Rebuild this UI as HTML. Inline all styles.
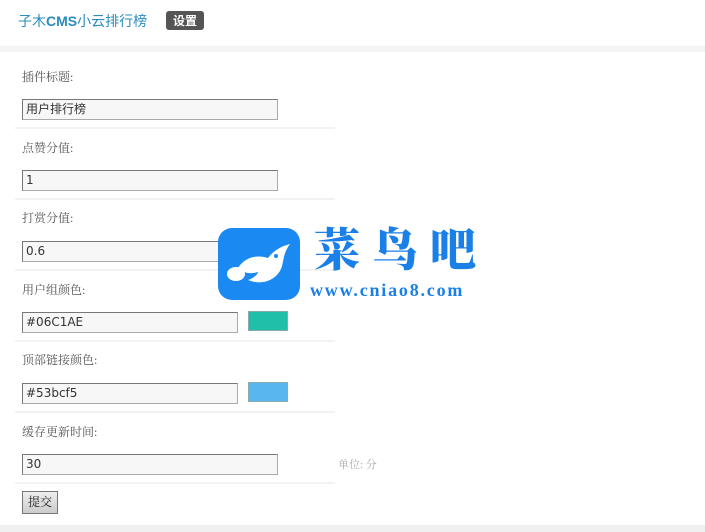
<!DOCTYPE html>
<html><head><meta charset="utf-8"><style>
*{margin:0;padding:0;box-sizing:border-box}
body{width:705px;height:532px;background:#fff;position:relative;overflow:hidden;font-family:"Liberation Serif","Noto Serif CJK SC",serif;font-size:12px;color:#444}
.a{position:absolute}
.lbl{position:absolute;left:22px;font-size:12px;color:#555}
.inp{position:absolute;left:22px;height:21px;border:1px solid #aaa;border-top-color:#777;border-left-color:#777;background:#f7f7f7;font-family:"DejaVu Sans","Noto Sans CJK SC",sans-serif;font-size:12px;color:#333;padding:2px 3px;line-height:15px}
.sep{position:absolute;left:15px;width:320px;height:2px;background:#f2f2f2}
.sw{position:absolute;left:248px;width:40px;height:20px;border:1px solid #8aa}
</style></head><body>
<div class="a" style="left:18px;top:11px;font-family:'Liberation Sans','Noto Sans CJK SC',sans-serif;font-size:14px;color:#2a8bbf">子木<b>CMS</b>小云排行榜</div>
<div class="a" style="left:166px;top:11px;width:38px;height:19px;background:#555;border-radius:3px;color:#fff;font-size:12px;text-align:center;line-height:19px;font-family:'Noto Sans CJK SC',sans-serif;font-weight:bold">设置</div>
<div class="a" style="left:0;top:46px;width:705px;height:6px;background:#f4f4f4"></div>

<div class="lbl" style="top:68px">插件标题:</div>
<div class="inp" style="top:99px;width:256px">用户排行榜</div>
<div class="sep" style="top:127px"></div>

<div class="lbl" style="top:139px">点赞分值:</div>
<div class="inp" style="top:170px;width:256px">1</div>
<div class="sep" style="top:198px"></div>

<div class="lbl" style="top:209px">打赏分值:</div>
<div class="inp" style="top:241px;width:256px">0.6</div>
<div class="sep" style="top:269px"></div>

<div class="lbl" style="top:281px">用户组颜色:</div>
<div class="inp" style="top:312px;width:216px">#06C1AE</div>
<div class="sw" style="top:311px;background:#1fbfa9"></div>
<div class="sep" style="top:340px"></div>

<div class="lbl" style="top:351px">顶部链接颜色:</div>
<div class="inp" style="top:383px;width:216px">#53bcf5</div>
<div class="sw" style="top:382px;background:#5ab6ee"></div>
<div class="sep" style="top:411px"></div>

<div class="lbl" style="top:423px">缓存更新时间:</div>
<div class="inp" style="top:454px;width:256px">30</div>
<div class="a" style="left:338px;top:456px;color:#aaa;font-size:11px">单位: 分</div>
<div class="sep" style="top:482px"></div>

<div class="a" style="left:22px;top:491px;width:36px;height:23px;border:1px solid #777;background:linear-gradient(#eee,#ccc);font-size:12px;text-align:center;line-height:21px;color:#222">提交</div>
<div class="a" style="left:0;top:525px;width:705px;height:7px;background:#f0f0f0"></div>

<div class="a" style="left:218px;top:228px;width:82px;height:72px;background:#1a8af2;border-radius:14px"></div>
<svg class="a" style="left:218px;top:228px" width="82" height="72" viewBox="0 0 82 72">
<path d="M20 40 C26 30 38 26 50 30 C56 22 64 18 72 16 C66 24 66 30 64 38 C60 52 44 58 30 52 C36 50 40 46 40 44 C34 46 26 46 20 40 Z" fill="#fff"/>
<ellipse cx="18" cy="46" rx="9" ry="7" fill="#fff"/>
<circle cx="58" cy="28" r="2" fill="#1a8af2"/>
</svg>
<div class="a" style="left:314px;top:222px;font-family:'Noto Serif CJK SC',serif;font-weight:900;font-size:46px;color:#1a7fe6;letter-spacing:12px;line-height:50px">菜鸟吧</div>
<div class="a" style="left:310px;top:280px;font-family:'Liberation Serif',serif;font-weight:bold;font-size:18px;color:#1a7fe6;letter-spacing:1.8px">www.cniao8.com</div>
</body></html>
